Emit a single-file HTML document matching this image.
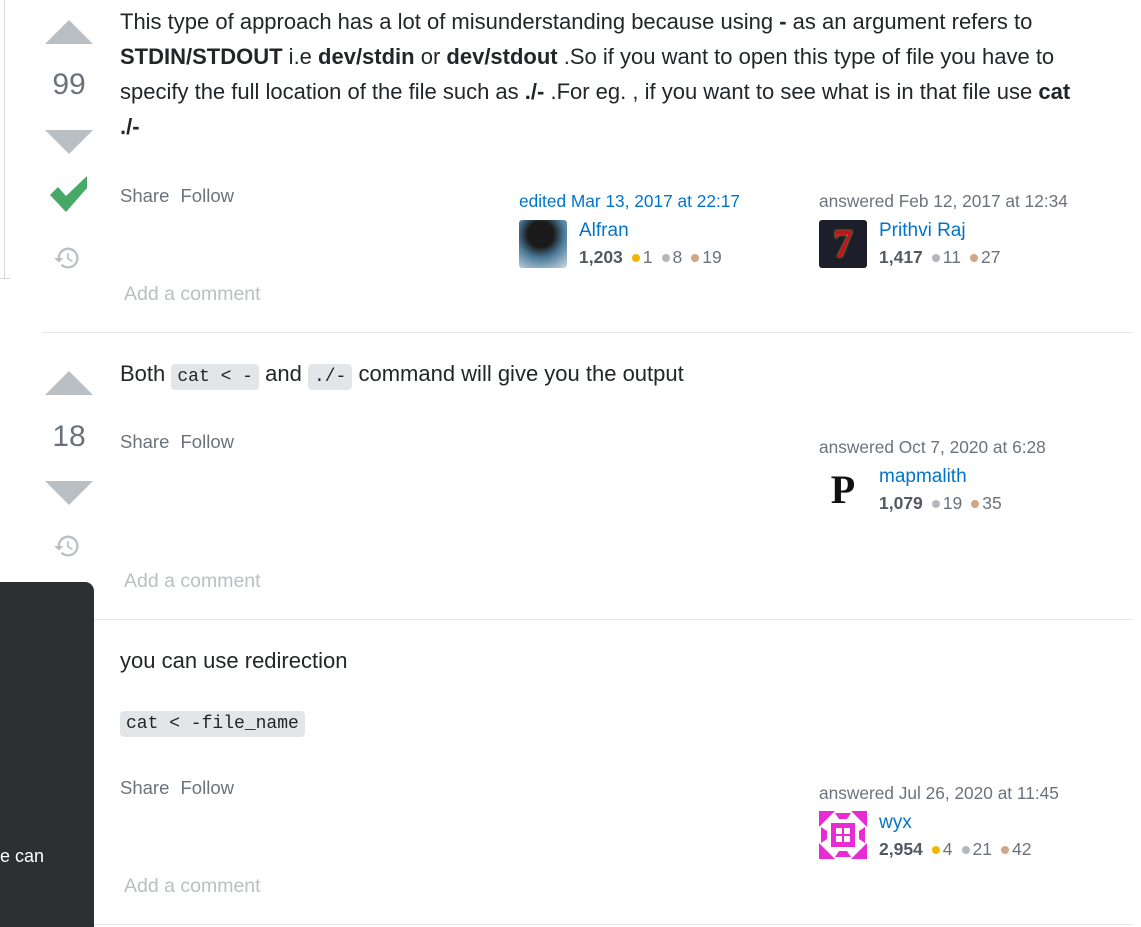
<!DOCTYPE html>
<html><head><meta charset="utf-8"><style>
body{margin:0;width:1141px;height:927px;background:#fff;position:relative;overflow:hidden;font-family:"Liberation Sans","DejaVu Sans",sans-serif;color:#232629}
.a{position:absolute}
.t{font-size:22px;line-height:35px}
.up{position:absolute;width:0;height:0;border-left:24px solid transparent;border-right:24px solid transparent;border-bottom:24px solid #babfc4}
.dn{position:absolute;width:0;height:0;border-left:24px solid transparent;border-right:24px solid transparent;border-top:24px solid #babfc4}
.num{position:absolute;width:48px;text-align:center;font-size:30px;color:#6a737c}
.sf{position:absolute;font-size:18.5px;color:#6a737c;word-spacing:6px}
.ac{position:absolute;font-size:19.5px;color:#babfc4}
.hr{position:absolute;height:1px;background:#e3e6e8;right:9px}
.meta{position:absolute;font-size:17.3px;color:#6a737c}
.name{position:absolute;font-size:19px;color:#0074cc}
.rep{position:absolute;font-size:17.5px;color:#6a737c}
.rep b{color:#525960}
.d{display:inline-block;width:8px;height:8px;border-radius:50%;margin:0 3px 1px 9px;vertical-align:middle}
.g{background:#f1b600}.s{background:#b4b8bc}.br{background:#d1a684}
code{font-family:"Liberation Mono",monospace;font-size:18px;background:#e3e6e8;border-radius:4px;padding:3px 6px}
</style></head><body>
<div class="a" style="left:4px;top:0;width:1px;height:278px;background:#d6d9dc"></div>
<div class="a" style="left:0;top:278px;width:10px;height:1px;background:#d6d9dc"></div>

<div class="up" style="left:45px;top:20px"></div>
<div class="num" style="left:45px;top:68px">99</div>
<div class="dn" style="left:45px;top:130px"></div>
<svg class="a" style="left:49px;top:176px" width="40" height="37" viewBox="0 0 40 37"><path d="M1 19 L9 11 L17 20 L38 0 L38 12 L17 36 Z" fill="#48a868"/></svg>
<svg class="a" style="left:53px;top:244px" width="28" height="28" viewBox="0 0 24 24"><path d="M13 3a9 9 0 0 0-9 9H1l4 4 4-4H6a7 7 0 1 1 2 5l-1.4 1.4A9 9 0 1 0 13 3zm-1 5v5l4.3 2.5.7-1.2-3.5-2.1V8z" fill="#babfc4"/></svg>

<div class="a t" style="left:120px;top:4px;width:965px">This type of approach has a lot of misunderstanding because using <b>-</b> as an argument refers to <b>STDIN/STDOUT</b> i.e <b>dev/stdin</b> or <b>dev/stdout</b> .So if you want to open this type of file you have to specify the full location of the file such as <b>./-</b> .For eg. , if you want to see what is in that file use <b>cat ./-</b></div>
<div class="sf" style="left:120px;top:185px">Share Follow</div>
<div class="meta" style="left:519px;top:191px;color:#0074cc">edited Mar 13, 2017 at 22:17</div>
<div class="a" style="left:519px;top:220px;width:48px;height:48px;border-radius:3px;background:radial-gradient(circle at 45% 30%,#1a1a1a 30%,#4a7a9a 55%,#d0dce4)"></div>
<div class="name" style="left:579px;top:220px">Alfran</div>
<div class="rep" style="left:579px;top:247px"><b>1,203</b><span class="d g"></span>1<span class="d s"></span>8<span class="d br"></span>19</div>
<div class="meta" style="left:819px;top:191px">answered Feb 12, 2017 at 12:34</div>
<div class="a" style="left:819px;top:220px;width:48px;height:48px;border-radius:3px;background:#1c1f2a;color:#c0141a;font:bold 40px/48px 'Liberation Serif',serif;text-align:center;text-shadow:0 0 2px #f3c04a">7</div>
<div class="name" style="left:879px;top:220px">Prithvi Raj</div>
<div class="rep" style="left:879px;top:247px"><b>1,417</b><span class="d s"></span>11<span class="d br"></span>27</div>
<div class="ac" style="left:124px;top:283px">Add a comment</div>
<div class="hr" style="left:42px;top:332px"></div>

<div class="up" style="left:45px;top:371px"></div>
<div class="num" style="left:45px;top:420px">18</div>
<div class="dn" style="left:45px;top:481px"></div>
<svg class="a" style="left:53px;top:532px" width="28" height="28" viewBox="0 0 24 24"><path d="M13 3a9 9 0 0 0-9 9H1l4 4 4-4H6a7 7 0 1 1 2 5l-1.4 1.4A9 9 0 1 0 13 3zm-1 5v5l4.3 2.5.7-1.2-3.5-2.1V8z" fill="#babfc4"/></svg>
<div class="a t" style="left:120px;top:356px">Both <code>cat &lt; -</code> and <code>./-</code> command will give you the output</div>
<div class="sf" style="left:120px;top:431px">Share Follow</div>
<div class="meta" style="left:819px;top:437px">answered Oct 7, 2020 at 6:28</div>
<div class="a" style="left:819px;top:466px;width:48px;height:48px;font:bold 40px/48px 'Liberation Serif',serif;text-align:center;color:#111">P</div>
<div class="name" style="left:879px;top:466px">mapmalith</div>
<div class="rep" style="left:879px;top:493px"><b>1,079</b><span class="d s"></span>19<span class="d br"></span>35</div>
<div class="ac" style="left:124px;top:570px">Add a comment</div>
<div class="hr" style="left:94px;top:619px"></div>

<div class="a" style="left:0;top:582px;width:94px;height:345px;background:#2d2f33;border-top-right-radius:9px"></div>
<div class="a" style="left:0;top:846px;font-size:18px;color:#fff">e can</div>

<div class="a t" style="left:120px;top:643px">you can use redirection</div>
<div class="a t" style="left:120px;top:703px"><code>cat &lt; -file_name</code></div>
<div class="sf" style="left:120px;top:777px">Share Follow</div>
<div class="meta" style="left:819px;top:783px">answered Jul 26, 2020 at 11:45</div>
<svg class="a" style="left:819px;top:811px" width="48" height="48" viewBox="0 0 48 48"><rect width="48" height="48" fill="#fff"/><path d="M0 0h16L0 16zM48 0H32l16 16zM0 48h16L0 32zM48 48H32l16-16z" fill="#e82bd3"/><rect x="12" y="12" width="24" height="24" fill="#e82bd3"/><rect x="17" y="17" width="6" height="6" fill="#fff"/><rect x="25" y="17" width="6" height="6" fill="#fff"/><rect x="17" y="25" width="6" height="6" fill="#fff"/><rect x="25" y="25" width="6" height="6" fill="#fff"/><path d="M16 2h16l-4 6h-8zM16 46h16l-4-6h-8zM2 16v16l6-4v-8zM46 16v16l-6-4v-8z" fill="#e82bd3"/></svg>
<div class="name" style="left:879px;top:812px">wyx</div>
<div class="rep" style="left:879px;top:839px"><b>2,954</b><span class="d g"></span>4<span class="d s"></span>21<span class="d br"></span>42</div>
<div class="ac" style="left:124px;top:875px">Add a comment</div>
<div class="hr" style="left:94px;top:924px"></div>
</body></html>
